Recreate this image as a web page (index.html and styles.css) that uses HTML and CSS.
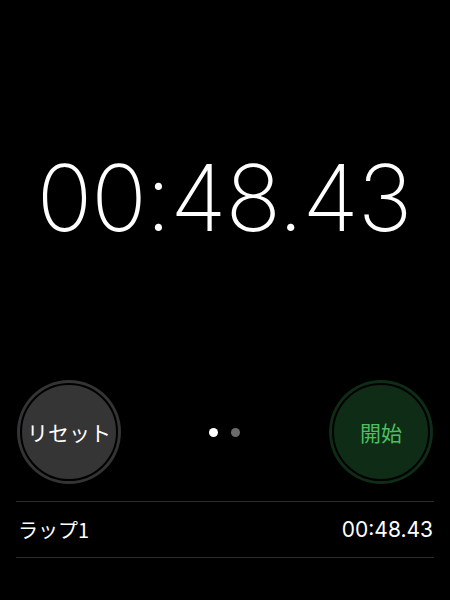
FILE: index.html
```html
<!DOCTYPE html>
<html lang="ja">
<head>
<meta charset="utf-8">
<link rel="stylesheet" href="styles.css">
</head>
<body>
<div class="app">
  <div class="display">
    <div class="time">00:48.43</div>
  </div>
  <div class="controls">
    <button class="btn btn-reset"><span class="btn-inner">リセット</span></button>
    <div class="pager"><span class="dot active"></span><span class="dot"></span></div>
    <button class="btn btn-start"><span class="btn-inner">開始</span></button>
  </div>
  <ul class="laps">
    <li class="lap"><span class="lap-name">ラップ1</span><span class="lap-time">00:48.43</span></li>
  </ul>
</div>
</body>
</html>
```
FILE: styles.css
```css
html, body {
  margin: 0;
  padding: 0;
  background: #000;
}
body {
  width: 450px;
  height: 600px;
  overflow: hidden;
  font-family: Inter, "Noto Sans CJK JP", sans-serif;
  color: #fff;
}
.app {
  display: flex;
  flex-direction: column;
}
.display {
  height: 380px;
  display: flex;
  justify-content: center;
  align-items: flex-start;
}
.time {
  margin-top: 142px;
  margin-left: -2px;
  font-family: Inter, sans-serif;
  font-weight: 200;
  font-size: 92px;
  line-height: 112px;
  letter-spacing: -1px;
}
.controls {
  display: flex;
  align-items: center;
  justify-content: space-between;
  padding: 0 17px;
  height: 104px;
}
.btn {
  width: 104px;
  height: 104px;
  border-radius: 50%;
  padding: 3px;
  border: 0;
  margin: 0;
  display: flex;
  align-items: center;
  justify-content: center;
  cursor: pointer;
}
.btn-inner {
  width: 100%;
  height: 100%;
  border-radius: 50%;
  border: 2px solid #000;
  box-sizing: border-box;
  display: flex;
  align-items: center;
  justify-content: center;
  font-family: "Noto Sans CJK JP", sans-serif;
  font-size: 21px;
}
.btn-reset {
  background: #343434;
}
.btn-reset .btn-inner {
  background: #353535;
  color: #fff;
}
.btn-start {
  background: #0f2d16;
}
.btn-start .btn-inner {
  background: #0f2d16;
  color: #4cbf60;
}
.pager {
  display: flex;
  gap: 13px;
  margin-right: 2px;
}
.dot {
  width: 9px;
  height: 9px;
  border-radius: 50%;
  background: #6b6b6b;
}
.dot.active {
  background: #fff;
}
.laps {
  list-style: none;
  margin: 17px 16px 0;
  padding: 0;
  border-top: 1px solid #2c2c2e;
}
.lap {
  display: flex;
  justify-content: space-between;
  align-items: center;
  height: 55px;
  border-bottom: 1px solid #2c2c2e;
  padding: 0 1px 0 2px;
  font-size: 20px;
}
.lap-name {
  font-family: "Noto Sans CJK JP", sans-serif;
}
.lap-time {
  font-family: Inter, sans-serif;
  font-size: 21px;
}
```
